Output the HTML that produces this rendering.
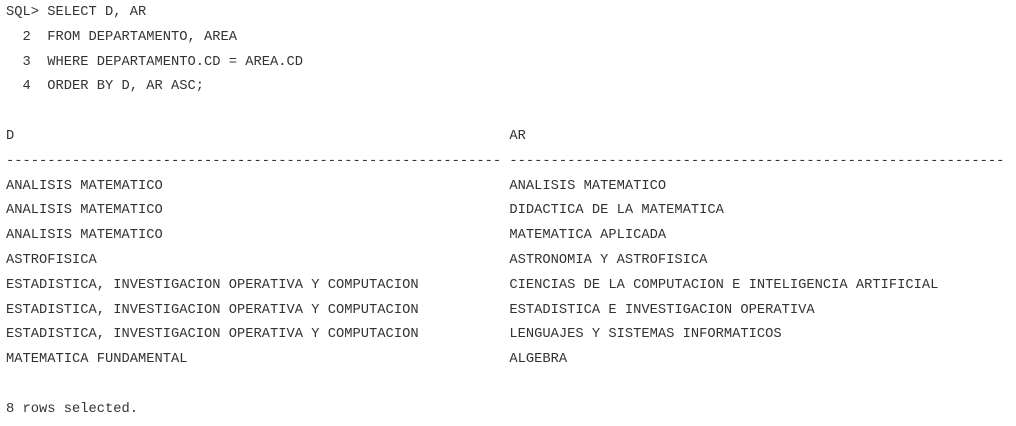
<!DOCTYPE html>
<html><head><style>
html,body{margin:0;padding:0;background:#fff;width:1016px;height:426px;overflow:hidden}
pre{margin:0;position:absolute;left:6px;top:1px;font-family:"Liberation Mono",monospace;font-size:13.75px;line-height:24.8px;color:#333}
</style></head><body>
<pre>SQL&gt; SELECT D, AR
  2  FROM DEPARTAMENTO, AREA
  3  WHERE DEPARTAMENTO.CD = AREA.CD
  4  ORDER BY D, AR ASC;

D                                                            AR
------------------------------------------------------------ ------------------------------------------------------------
ANALISIS MATEMATICO                                          ANALISIS MATEMATICO
ANALISIS MATEMATICO                                          DIDACTICA DE LA MATEMATICA
ANALISIS MATEMATICO                                          MATEMATICA APLICADA
ASTROFISICA                                                  ASTRONOMIA Y ASTROFISICA
ESTADISTICA, INVESTIGACION OPERATIVA Y COMPUTACION           CIENCIAS DE LA COMPUTACION E INTELIGENCIA ARTIFICIAL
ESTADISTICA, INVESTIGACION OPERATIVA Y COMPUTACION           ESTADISTICA E INVESTIGACION OPERATIVA
ESTADISTICA, INVESTIGACION OPERATIVA Y COMPUTACION           LENGUAJES Y SISTEMAS INFORMATICOS
MATEMATICA FUNDAMENTAL                                       ALGEBRA

8 rows selected.</pre>
</body></html>
